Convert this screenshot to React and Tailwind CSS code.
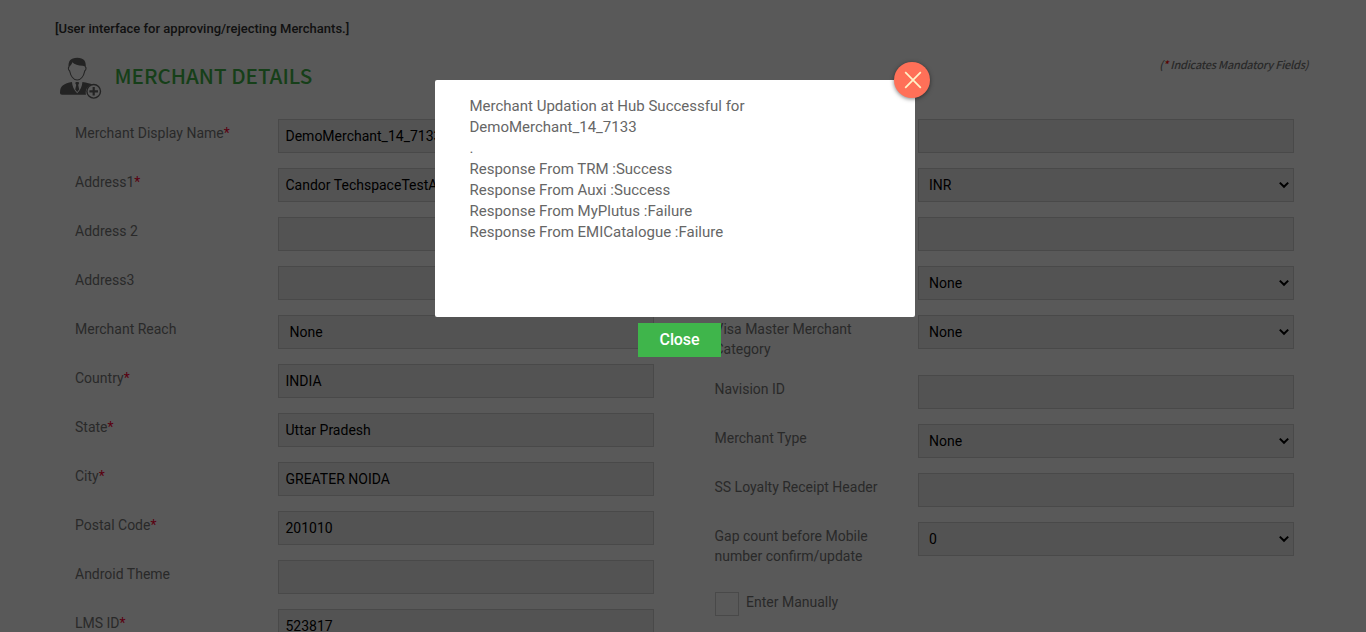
import React from "react";

const leftRows = [
  { label: "Merchant Display Name", required: true, value: "DemoMerchant_14_7133" },
  { label: "Address1", required: true, value: "Candor TechspaceTestAddress" },
  { label: "Address 2", value: "" },
  { label: "Address3", value: "" },
  { label: "Merchant Reach", value: "None", select: true },
  { label: "Country", required: true, value: "INDIA" },
  { label: "State", required: true, value: "Uttar Pradesh" },
  { label: "City", required: true, value: "GREATER NOIDA" },
  { label: "Postal Code", required: true, value: "201010" },
  { label: "Android Theme", value: "" },
  { label: "LMS ID", required: true, value: "523817" },
];

const rightRows = [
  { label: "", value: "" },
  { label: "", value: "INR", select: true },
  { label: "", value: "" },
  { label: "", value: "None", select: true },
  { label: "Visa Master Merchant Category", value: "None", select: true },
  { label: "Navision ID", value: "" },
  { label: "Merchant Type", value: "None", select: true },
  { label: "SS Loyalty Receipt Header", value: "" },
  { label: "Gap count before Mobile number confirm/update", value: "0", select: true },
];

function Row({ label, required, value, select }) {
  return (
    <div className="mb-[15px] flex items-start">
      <div className="-mb-px w-[203px] shrink-0 pt-1 pr-[30px] pb-0.5 text-sm leading-5 text-[#777777]">
        {label}
        {required && <span className="text-[#ff0033]">*</span>}
      </div>
      <div
        className={`flex h-[34px] w-[376px] items-center justify-between border border-[#d2d2d2] bg-[#eeeeee] text-sm text-black ${
          select ? "pr-1 pl-[10.5px]" : "px-[6.5px]"
        }`}
      >
        <span>{value}</span>
        {select && (
          <svg width="10" height="8" viewBox="0 0 10 8" fill="none" stroke="#000" strokeWidth="2">
            <path d="M0.8 1.6 5 5.8 9.2 1.6" />
          </svg>
        )}
      </div>
    </div>
  );
}

function MerchantIcon() {
  return (
    <svg width="42" height="42" viewBox="0 0 42 42" fill="none" className="-mt-px">
      <path
        d="M8.700 11.500C7.700 4 10.500.7 17.200.7S26.600 4 25.700 11.500C25.300 9.500 24.500 8.800 22.500 8.700 18 8.600 14.500 7.500 12.300 5.300 11.800 8 9.800 8.500 8.700 11.500Z"
        fill="#666"
      />
      <path
        d="M9 10c-1 .5-.8 3 .6 3.800C10.700 19 13.700 23 17.200 23S23.700 19 24.800 13.800c1.400-.8 1.600-3.300.6-3.800"
        stroke="#666"
        strokeWidth="1.100"
      />
      <path
        d="M12 25C12.200 29 14 33 17.200 36.200 20.400 33 22.200 29 22.400 25c4.500.8 8 1.500 10.200 2.400-4.500.6-7.800 5-6.600 10.300H2C.7 37.700 0 37 0 35.500 0 28.500 4 26.500 12 25Z"
        fill="#666"
      />
      <path d="M13.400 25.500C13.600 29 15 32 17.200 34.500 19.400 32 20.800 29 21 25.500Z" fill="#fff" />
      <path d="m15.200 26 .8-1h2.400l.8 1-1 2 1 4.500-2 2.500-2-2.500 1-4.500Z" fill="#666" />
      <circle cx="33.700" cy="34.300" r="6.800" stroke="#666" strokeWidth="1.400" />
      <path d="M33.700 30v8.600M29.400 34.300h8.600" stroke="#666" strokeWidth="2.200" />
    </svg>
  );
}

export default function App() {
  return (
    <div className="relative h-[632px] w-full overflow-hidden bg-white font-['Roboto',sans-serif]">
      <main className="w-[1366px] px-[55px] pt-[19px]">
        <p className="text-[13px] leading-5 font-medium text-[#333333]">
          [User interface for approving/rejecting Merchants.]
        </p>
        <header className="mt-[19px] flex h-[61px] items-start justify-between">
          <div className="flex items-start pl-[5px]">
            <MerchantIcon />
            <h1 className="ml-[12.5px] pt-0.5 font-['Noto_Sans_CJK_SC',sans-serif] text-[20.6px] leading-[30px] font-medium text-[#3fb549]">
              MERCHANT DETAILS
            </h1>
          </div>
          <p className="-mt-px pr-[2.5px] font-['Noto_Sans_CJK_SC',sans-serif] text-[11px] leading-[14px] font-medium tracking-[-0.24px] text-[#777777] italic">
            (<span className="text-[#ff0000]">*</span> Indicates Mandatory Fields)
          </p>
        </header>
        <div className="flex gap-[60.5px] pl-5">
          <section className="w-[579px]">
            {leftRows.map((row) => (
              <Row key={row.label} {...row} />
            ))}
          </section>
          <section className="w-[579px]">
            {rightRows.map((row, i) => (
              <Row key={i} {...row} />
            ))}
            <div className="mt-[25px] flex items-start gap-[7.5px]">
              <span className="size-6 border border-[#d2d2d2]" />
              <span className="text-sm leading-5 text-[#777777]">Enter Manually</span>
            </div>
          </section>
        </div>
      </main>

      <div className="absolute inset-0 bg-black/65" />

      <div
        role="dialog"
        className="absolute top-[80px] left-[435px] h-[237px] w-[480px] rounded-[2px] bg-white pt-4 pl-[34.5px] text-[15px] leading-[21px] text-[#666666]"
      >
        <p>
          Merchant Updation at Hub Successful for
          <br />
          DemoMerchant_14_7133
        </p>
        <p>.</p>
        <p>Response From TRM :Success</p>
        <p>Response From Auxi :Success</p>
        <p>Response From MyPlutus :Failure</p>
        <p>Response From EMICatalogue :Failure</p>
        <button
          aria-label="Close dialog"
          className="absolute -top-[18px] -right-[15px] flex size-[36px] items-center justify-center rounded-full bg-[#ff7058] shadow-[0_1px_4px_rgba(0,0,0,0.5)]"
        >
          <svg
            width="18"
            height="18"
            viewBox="0 0 18 18"
            stroke="#fff3c8"
            strokeWidth="1.700"
            className="ml-px"
          >
            <path d="M1.200 1.200 16.800 16.800M16.800 1.200 1.200 16.800" />
          </svg>
        </button>
        <button className="absolute top-[243px] left-[203px] h-[34px] w-[83px] bg-[#3fb54b] text-base leading-[34px] font-medium tracking-[-0.1px] text-white">
          Close
        </button>
      </div>
    </div>
  );
}
